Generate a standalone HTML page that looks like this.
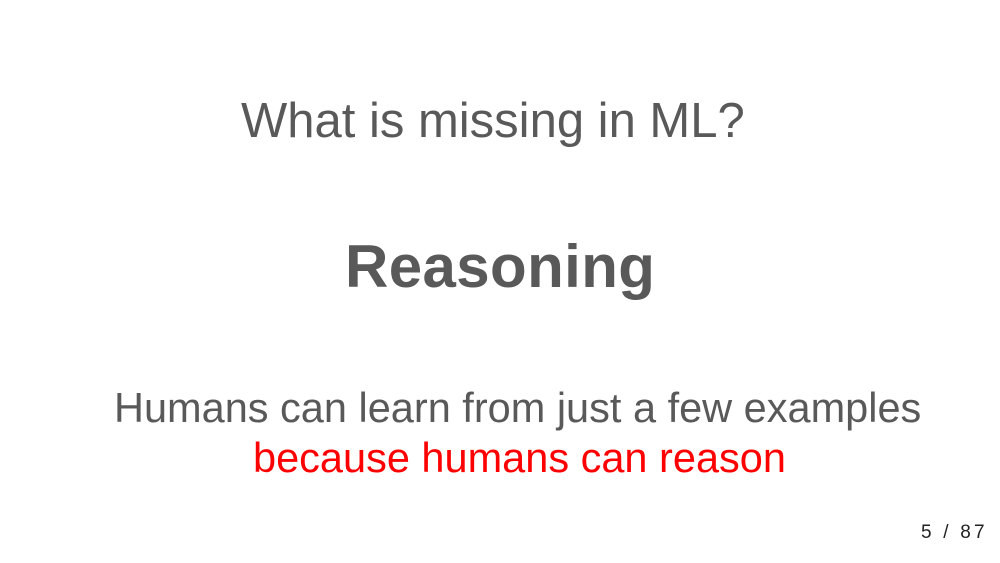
<!DOCTYPE html>
<html><head><style>
html,body{margin:0;padding:0;background:#fff;width:1000px;height:563px;overflow:hidden;position:relative;font-family:"Liberation Sans",sans-serif;}
.t{position:absolute;white-space:nowrap;color:#595959;}
</style></head><body>
<div class="t" style="left:241px;top:93px;font-size:49px;">What is missing in ML?</div>
<div class="t" style="left:345px;top:232px;font-size:60px;font-weight:bold;letter-spacing:0.4px;">Reasoning</div>
<div class="t" style="left:114px;top:384px;font-size:41.5px;">Humans can learn from just a few examples</div>
<div class="t" style="left:253px;top:434px;font-size:41.5px;color:#f00;">because humans can reason</div>
<div class="t" style="left:921px;top:522px;font-size:19px;color:#222;letter-spacing:3.2px;">5 / 87</div>
</body></html>
